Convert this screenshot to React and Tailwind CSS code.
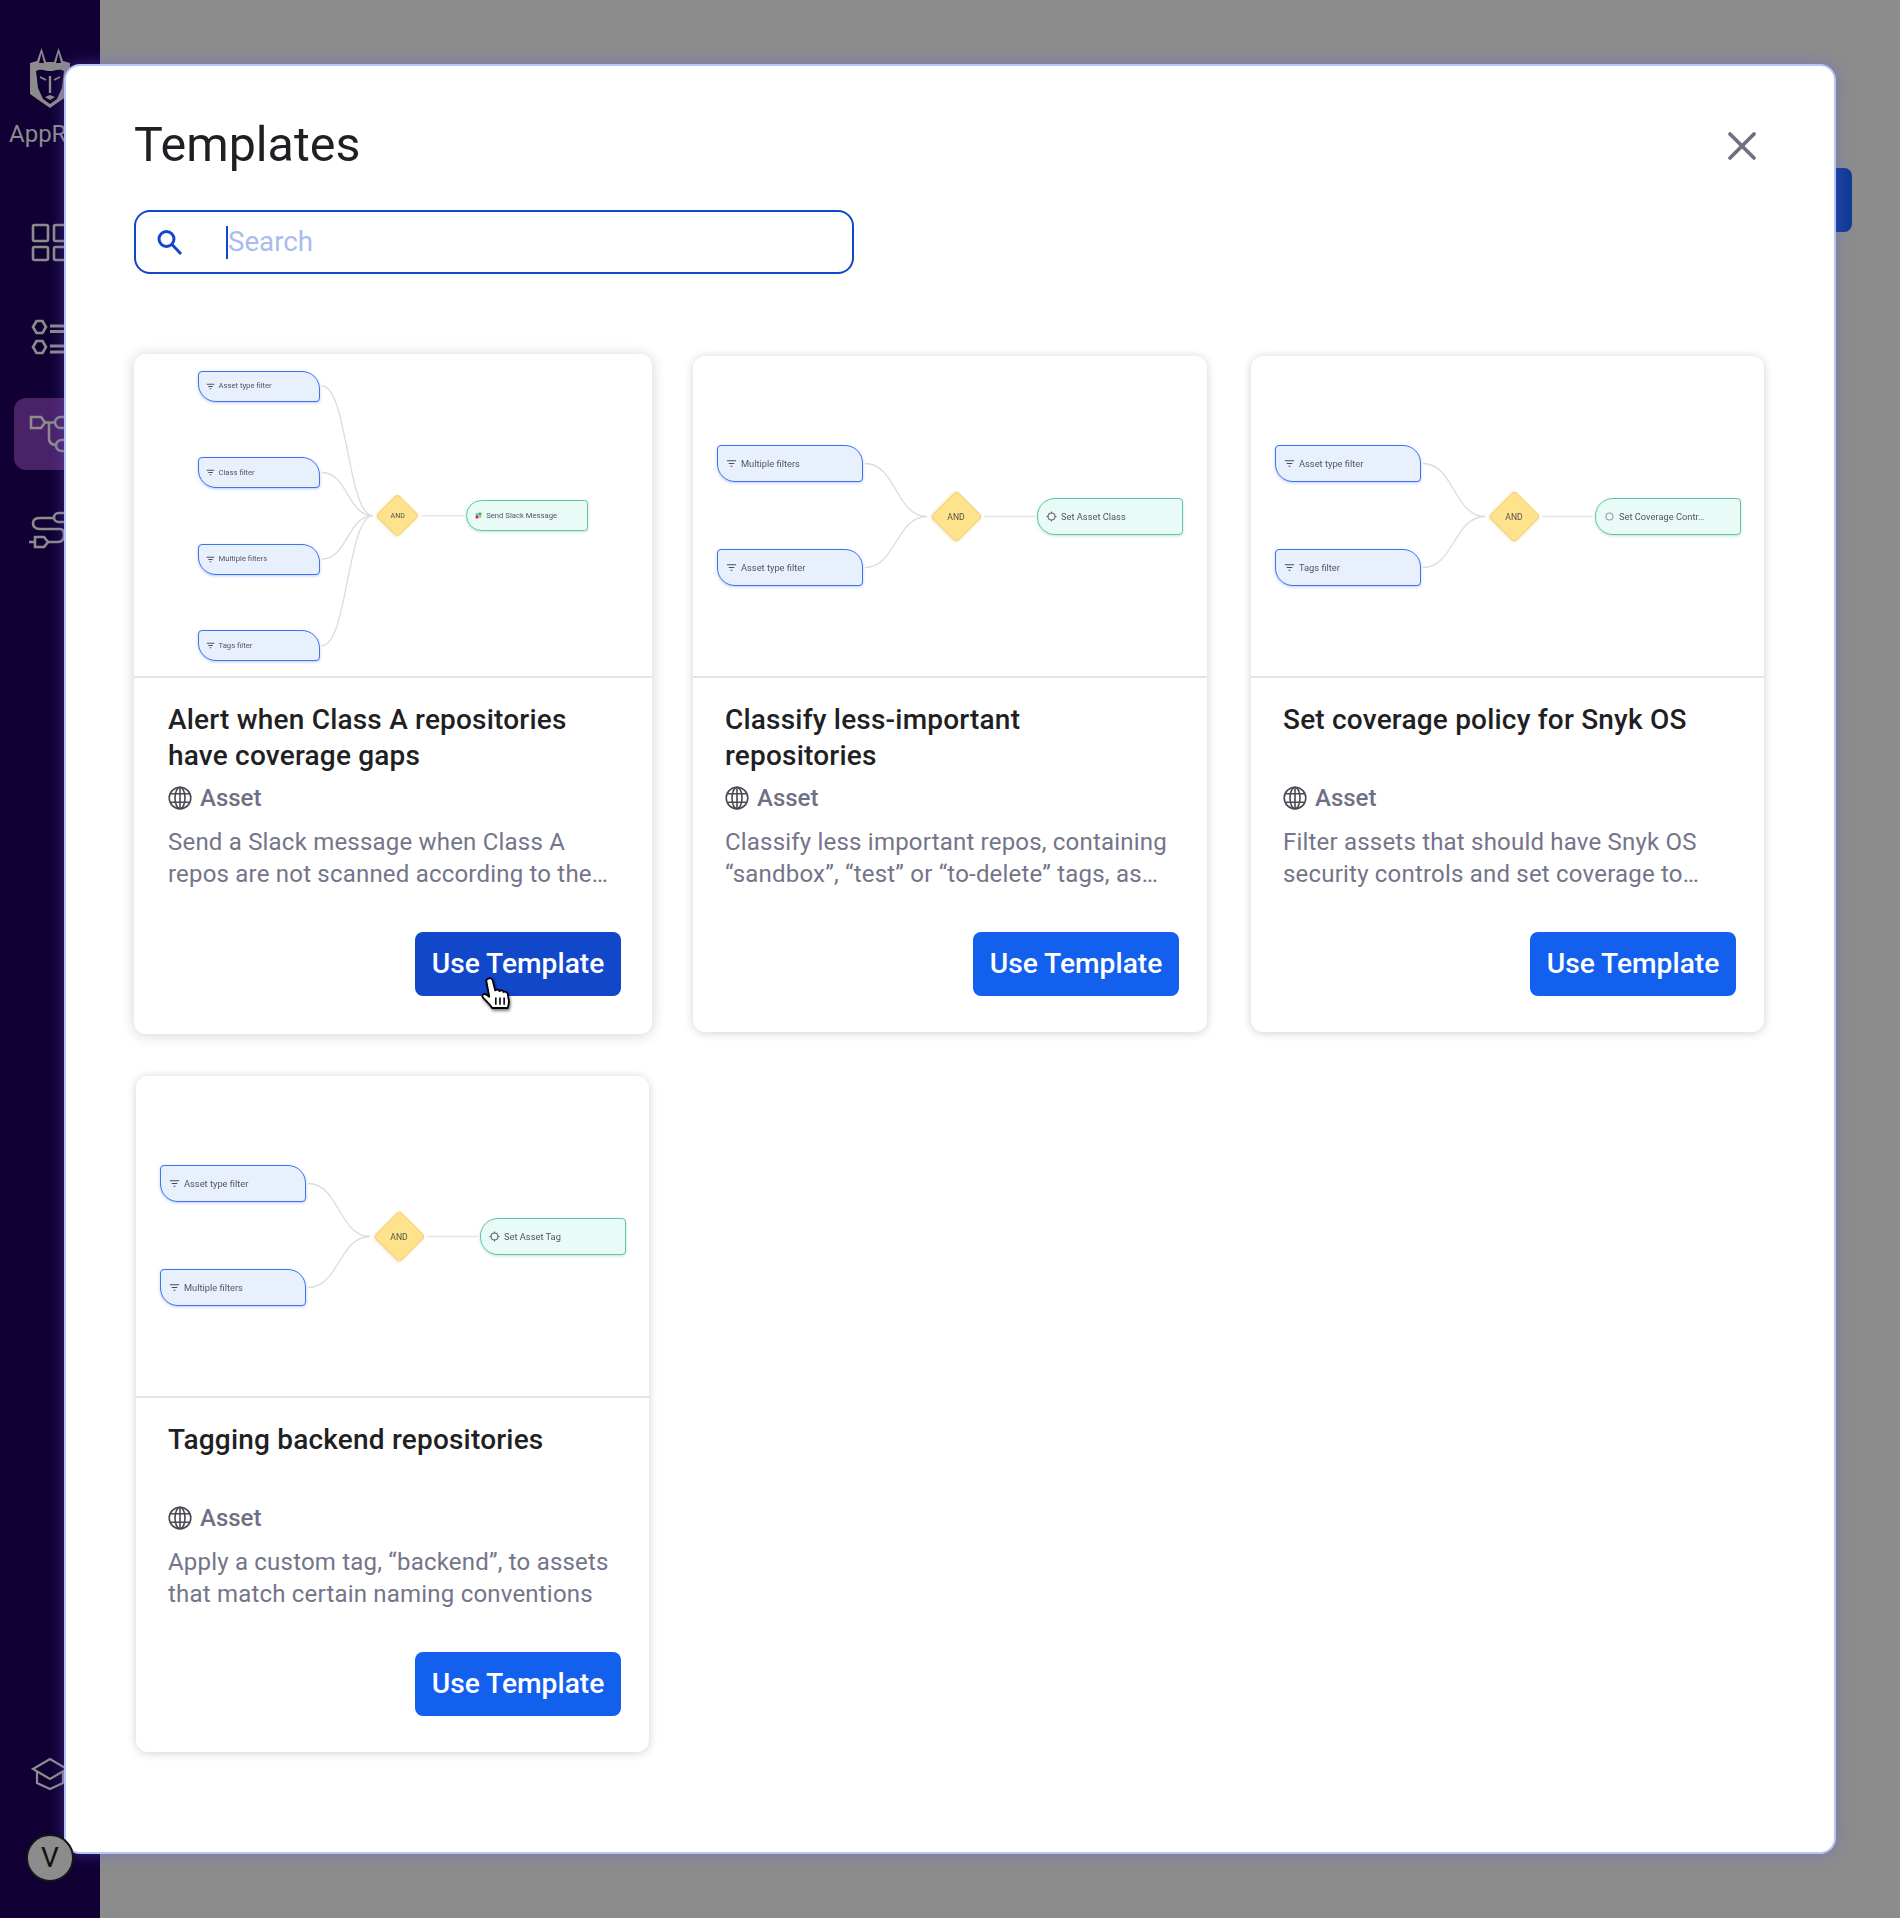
import React from 'react'
import { X } from 'lucide-react'

const font = { fontFamily: 'Roboto, sans-serif' }

const FilterIcon = ({ size }) => (
  <svg width={size} height={size} viewBox="0 0 12 12" className="shrink-0" fill="none" stroke="#4b4b57" strokeWidth="1.3">
    <path d="M1 3h10M3 6h6M5 9h2" />
  </svg>
)

const SlackIcon = ({ size }) => (
  <svg width={size} height={size} viewBox="0 0 12 12" className="shrink-0 ml-[1px] mr-[1px]">
    <rect x="1" y="2" width="5" height="4" rx="1.5" fill="#36c5f0" />
    <rect x="6" y="1" width="5" height="5" rx="1.5" fill="#2eb67d" />
    <rect x="1" y="6" width="5" height="5" rx="1.5" fill="#e01e5a" />
    <rect x="6" y="6" width="5" height="4" rx="1.5" fill="#ecb22e" />
  </svg>
)

const TargetIcon = ({ size, light }) => (
  <svg width={size} height={size} viewBox="0 0 12 12" className="shrink-0" fill="none" stroke={light ? '#9a9aa5' : '#66666f'} strokeWidth="1.2">
    <circle cx="6" cy="6" r="3.8" />
    {!light && <path d="M6 0.5v2M6 9.5v2M0.5 6h2M9.5 6h2" />}
  </svg>
)

const Diagram = ({ filters, action, actionIcon, small, light }) => {
  const cfg = small
    ? { box: 324, left: 64, width: 122, height: 31, font: 7.7, icon: 9, cy: 161.7, cx: 263.7, half: 31, aLeft: 331.7, aWidth: 122, start: 188, end: 239, rStart: 287, rEnd: 330.7, gap: 3.5, pad: 7 }
    : { box: 322, left: 24, width: 146, height: 37, font: 9.3, icon: 11, cy: 160.5, cx: 263, half: 37, aLeft: 344, aWidth: 146, start: 172, end: 234, rStart: 291, rEnd: 342, gap: 4, pad: 8 }
  const mid = (cfg.start + cfg.end) / 2

  return (
    <div className="relative border-b-2 border-[#e3e3ea]" style={{ ...font, height: cfg.box }}>
      <div className="absolute inset-0 blur-[0.3px]">
        <svg className="absolute inset-0" width="516" height="320" fill="none">
          {filters.map((f) => (
            <path key={f.label} d={`M${cfg.start} ${f.y} C${mid} ${f.y} ${mid} ${cfg.cy} ${cfg.end} ${cfg.cy}`} stroke="#dcdcdc" strokeWidth="1.3" />
          ))}
          <path d={`M${cfg.rStart} ${cfg.cy} H${cfg.rEnd}`} stroke="#e6e6e6" strokeWidth="1.6" />
        </svg>

        {filters.map((f) => (
          <div
            key={f.label}
            className="absolute flex items-center bg-[#e8effd] border border-[#3b73f0] rounded-tl-[4px] rounded-tr-[18px] rounded-bl-[18px] rounded-br-[4px] shadow-[0_1px_3px_rgba(60,100,220,0.35)] text-[#55555f]"
            style={{ left: cfg.left, top: f.y - cfg.height / 2, width: cfg.width, height: cfg.height, fontSize: cfg.font, paddingLeft: cfg.pad, gap: cfg.gap }}
          >
            <FilterIcon size={cfg.icon} />
            <span>{f.label}</span>
          </div>
        ))}

        <div
          className="absolute flex items-center justify-center"
          style={{ left: cfg.cx - cfg.half / 2, top: cfg.cy - cfg.half / 2, width: cfg.half, height: cfg.half }}
        >
          <div className="absolute inset-0 rotate-45 rounded-[4px] bg-[#ffe28c] border border-[#fbd06e] shadow-[0_1px_3px_rgba(200,170,80,0.4)]" />
          <span className="relative pt-[1px] text-[#55514a]" style={{ fontSize: small ? 7 : 8.6 }}>AND</span>
        </div>

        <div
          className="absolute flex items-center bg-[#e9fbf7] border border-[#62c3a9] rounded-l-[18px] rounded-r-[4px] shadow-[0_1px_3px_rgba(60,160,130,0.3)] text-[#55555f]"
          style={{ left: cfg.aLeft, top: cfg.cy - cfg.height / 2, width: cfg.aWidth, height: cfg.height, fontSize: cfg.font, paddingLeft: cfg.pad, gap: cfg.gap }}
        >
          {actionIcon === 'slack' ? <SlackIcon size={cfg.icon - 2} /> : <TargetIcon size={cfg.icon} light={light} />}
          <span className="whitespace-nowrap">{action}</span>
        </div>
      </div>
    </div>
  )
}

const Globe = () => (
  <svg width="24" height="24" viewBox="0 0 24 24" fill="none" stroke="#4a4a55" strokeWidth="1.6" className="shrink-0">
    <circle cx="12" cy="12" r="10.8" />
    <ellipse cx="12" cy="12" rx="5" ry="10.8" />
    <path d="M12 1.2v21.6M2.4 7.8h19.2M2.4 16.2h19.2" />
  </svg>
)

const TemplateCard = ({ title, description, hovered, diagram, className }) => (
  <div className={`relative flex flex-col bg-white rounded-xl ${hovered ? 'h-[680px] -m-[2px] shadow-[0_1px_14px_rgba(30,30,60,0.2)]' : 'h-[676px] shadow-[0_1px_10px_rgba(30,30,60,0.2)]'} ${className || ''}`}>
    <Diagram {...diagram} />
    <div className={`flex flex-col flex-1 pt-[24px] ${hovered ? 'pl-[34px] pr-[31px] pb-[38px]' : 'pl-[32px] pr-[28px] pb-[36px]'}`} style={font}>
      <div className="h-[72px] text-[28px] leading-[36px] tracking-[0.2px] font-medium text-[#1f1f24] whitespace-pre-line">{title}</div>
      <div className="flex items-center gap-[8px] mt-[8px] h-[32px]">
        <Globe />
        <span className="text-[24px] font-medium text-[#6f6f85]">Asset</span>
      </div>
      <div className="mt-[12px] text-[24px] leading-[32px] text-[#74748a] tracking-[0.2px] whitespace-pre-line">{description}</div>
      <div className="mt-auto flex justify-end">
        <button className={`w-[206px] h-[64px] rounded-lg text-white text-[28.2px] font-medium ${hovered ? 'bg-[#1147c9]' : 'bg-[#1360ef]'}`}>
          Use Template
        </button>
      </div>
    </div>
  </div>
)

const Sidebar = () => (
  <div className="absolute left-0 top-0 w-[100px] h-[1918px] bg-[#100034]">
    <svg className="absolute left-[24px] top-[44px]" width="52" height="70" viewBox="0 0 52 70">
      <path d="M6 19 L13 17 L17.5 4 L22 18 H30 L34.5 4 L39 17 L46 19 V50 L26 64 L6 50 Z" fill="#8c8c8c" />
      <path d="M17.5 9 L15 19 L20 19 Z M34.5 9 L32 19 L37 19 Z" fill="#100034" />
      <path d="M12 27 C17 24 22 27 26 27 C30 27 35 24 40 27 L38 44 L33 55 L26 60 L19 55 L14 44 Z" fill="#100034" />
      <path d="M16 33 L22 36 M36 33 L30 36" stroke="#8c8c8c" strokeWidth="1.6" />
      <path d="M24.8 32 V49 H27.2 V32 Z M21 53 L26 56 L31 53 L26 51 Z" fill="#8c8c8c" />
    </svg>
    <div className="absolute left-[9px] top-[116px] text-[24px] text-[#8c8c8c]" style={font}>AppR</div>

    <svg className="absolute left-[30px] top-[222px]" width="44" height="40" fill="none" stroke="#8c8c8c" strokeWidth="2.6">
      <rect x="3" y="3" width="15" height="16" rx="1.5" />
      <rect x="24" y="3" width="15" height="16" rx="1.5" />
      <rect x="3" y="25" width="15" height="13" rx="1.5" />
      <rect x="24" y="25" width="15" height="13" rx="1.5" />
    </svg>

    <svg className="absolute left-[30px] top-[318px]" width="44" height="40" fill="none" stroke="#8c8c8c" strokeWidth="2.6">
      <path d="M3 9 L6.5 3 H12.5 L16 9 L12.5 15 H6.5 Z" />
      <path d="M3 29 L6.5 23 H12.5 L16 29 L12.5 35 H6.5 Z" />
      <path d="M20 8 H40 M20 13.5 H36 M20 28 H40 M20 34 H36" strokeWidth="3" />
    </svg>

    <div className="absolute left-[14px] top-[398px] w-[86px] h-[72px] rounded-xl bg-[#4a2268]">
      <svg className="absolute left-[14px] top-[16px]" width="52" height="44" fill="none" stroke="#8c8c8c" strokeWidth="2.6">
        <path d="M3 3 H13 L17 8.5 L13 14 H3 Z" />
        <path d="M17 8.5 H27 M21 8.5 V24 Q21 31 28 31" />
        <rect x="27" y="3" width="16" height="11" rx="5.5" />
        <rect x="28" y="26" width="16" height="11" rx="5.5" />
      </svg>
    </div>

    <svg className="absolute left-[28px] top-[510px]" width="44" height="44" fill="none" stroke="#8c8c8c" strokeWidth="2.6">
      <rect x="26" y="3" width="14" height="9" rx="4.5" />
      <path d="M26 8 H12 Q5 8 5 13 Q5 19 12 19 H32 Q36 19 36 25 Q36 32 30 32 H20" />
      <path d="M7 27 H16 L20 32 L16 37 H7 Z M1 32 H7" />
    </svg>

    <svg className="absolute left-[30px] top-[1756px]" width="40" height="36" fill="none" stroke="#8c8c8c" strokeWidth="2.2">
      <path d="M3 13 L20 3 L37 13 L20 23 Z" />
      <path d="M7 15 V27 L20 33 L33 27 V15" />
    </svg>
  </div>
)

const filtersFour = [
  { label: 'Asset type filter', y: 32 },
  { label: 'Class filter', y: 118.5 },
  { label: 'Multiple filters', y: 205 },
  { label: 'Tags filter', y: 291.5 },
]

const App = () => (
  <div className="relative w-[1900px] h-[1918px] overflow-hidden bg-[#8c8c8c]">
    <Sidebar />
    <div className="absolute left-[1700px] top-[168px] w-[152px] h-[64px] rounded-lg bg-[#123a96]" />

    <div className="absolute left-[64px] top-[64px] w-[1772px] h-[1790px] bg-white border-2 border-[#b3c8f7] rounded-2xl shadow-[0_0_16px_rgba(110,90,230,0.4)] pt-[48px] pl-[68px] pr-[70px]" style={font}>
      <div className="flex items-center justify-between h-[64px]">
        <div className="text-[48.4px] text-[#1f1f24] leading-none -mt-[1px]">Templates</div>
        <X size={48} strokeWidth={1.9} className="text-[#6f6f82] -mr-[2px]" />
      </div>

      <div className="flex items-center mt-[32px] w-[720px] h-[64px] border-2 border-[#1147c9] rounded-2xl pl-[20px]">
        <svg width="28" height="28" viewBox="0 0 28 28" fill="none" stroke="#1147c9" strokeWidth="3">
          <circle cx="10.5" cy="11" r="7.5" />
          <path d="M16 16.5 L25 26" />
        </svg>
        <div className="w-[2px] h-[33px] bg-[#1147c9] ml-[42px]" />
        <div className="text-[27.7px] text-[#a9bcf0]">Search</div>
      </div>

      <div className="grid grid-cols-[514px_514px_514px] gap-x-[43px] gap-y-[44px] mt-[82px] ml-[2px]">
        <TemplateCard
          hovered
          title={'Alert when Class A repositories have coverage gaps'}
          description={'Send a Slack message when Class A\nrepos are not scanned according to the…'}
          diagram={{ small: true, filters: filtersFour, action: 'Send Slack Message', actionIcon: 'slack' }}
        />
        <TemplateCard
          title={'Classify less-important\nrepositories'}
          description={'Classify less important repos, containing\n“sandbox”, “test” or “to-delete” tags, as…'}
          diagram={{ filters: [{ label: 'Multiple filters', y: 107.5 }, { label: 'Asset type filter', y: 211.5 }], action: 'Set Asset Class' }}
        />
        <TemplateCard
          className="ml-[1px]"
          title={'Set coverage policy for Snyk OS'}
          description={'Filter assets that should have Snyk OS\nsecurity controls and set coverage to…'}
          diagram={{ light: true, filters: [{ label: 'Asset type filter', y: 107.5 }, { label: 'Tags filter', y: 211.5 }], action: 'Set Coverage Contr…' }}
        />
        <TemplateCard
          className="w-[513px]"
          title={'Tagging backend repositories'}
          description={'Apply a custom tag, “backend”, to assets\nthat match certain naming conventions'}
          diagram={{ filters: [{ label: 'Asset type filter', y: 107.5 }, { label: 'Multiple filters', y: 211.5 }], action: 'Set Asset Tag' }}
        />
      </div>
    </div>

    <div className="absolute left-[26px] top-[1834px] w-[48px] h-[48px] rounded-full bg-[#8c8c8c] border-2 border-[#151515] flex items-center justify-center text-[28px] text-[#111]" style={font}>
      V
    </div>

    <svg className="absolute left-[478px] top-[975px]" width="38" height="38" viewBox="0 0 32 32" style={{ filter: 'drop-shadow(1px 2px 1.5px rgba(0,0,0,0.5))' }}>
      <path d="M9 3 c1.5 -1 3 0 3.5 2 l2 8 c1 -1 3 -1 3.5 .5 c1 -1 3 -.8 3.5 .8 c1 -.6 3 -.2 3.5 1.5 l1 6 c.3 2 -.3 4 -1 6 H12 c-2 -3 -5 -6 -8 -9 c-1 -1.5 .5 -3.5 2.5 -2.5 l3 2 L7 5 c-.3 -.8 .5 -1.6 2 -2 z" fill="#fff" stroke="#000" strokeWidth="1.5" strokeLinejoin="round" />
      <path d="M15 19v6M18.5 19v6M22 19v6" stroke="#000" strokeWidth="1.3" />
    </svg>
  </div>
)

export default App
